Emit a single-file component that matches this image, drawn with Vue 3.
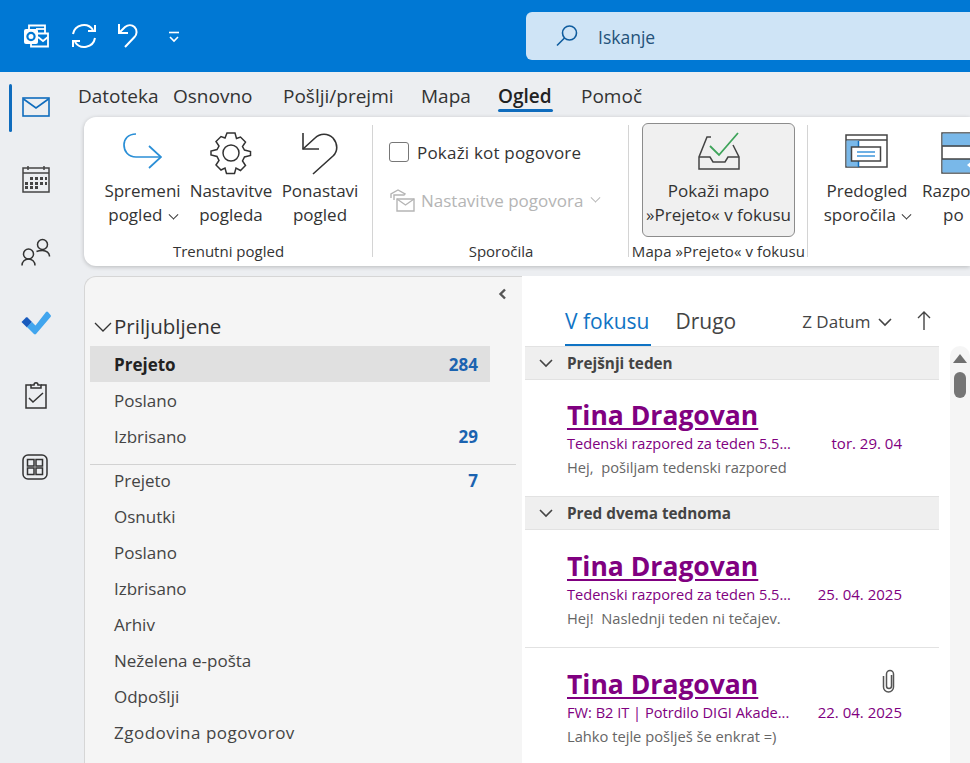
<template>
  <div class="app">
    <header class="titlebar">
      <div class="quick">
        <svg class="q-icon logo" width="25" height="24" viewBox="0 0 25 24" fill="none" stroke="#fff" stroke-width="1.800">
          <path d="M5 5V1.500h16V10" />
          <path d="M12 5h9" />
          <rect x="0" y="5" width="14" height="15" rx="2" fill="#fff" stroke="none" />
          <circle cx="7" cy="12.500" r="3.600" fill="none" stroke="#0078d4" stroke-width="2.200" />
          <path d="M14 9.500h10v13H7V20" />
          <path d="M14 13l5 4 5-4" />
        </svg>
        <svg class="q-icon" width="26" height="26" viewBox="0 0 26 26" fill="none" stroke="#fff" stroke-width="2">
          <path d="M2 11A11 11 0 0 1 22 7" />
          <path d="M24 2v6h-7" />
          <path d="M24 15A11 11 0 0 1 4 19" />
          <path d="M2 24v-6h7" />
        </svg>
        <svg class="q-icon" width="24" height="26" viewBox="0 0 24 26" fill="none" stroke="#fff" stroke-width="2">
          <path d="M2 1v9h9" />
          <path d="M2 10l6-6c3-2.500 7-2.500 9.500 0 3 3 2.500 7.500 0 10L8 24" />
        </svg>
        <svg class="q-small" width="12" height="12" viewBox="0 0 12 12" fill="none" stroke="#fff" stroke-width="1.600">
          <path d="M1 1.500h10" />
          <path d="M2 6l4 4 4-4" />
        </svg>
      </div>
      <div class="search">
        <svg width="24" height="24" viewBox="0 0 24 24" fill="none" stroke="#0f5c9e" stroke-width="1.600">
          <circle cx="14.500" cy="9" r="7" />
          <path d="M9.500 14L2 21.500" />
        </svg>
        <span>Iskanje</span>
      </div>
    </header>

    <div class="body">
      <nav class="rail">
        <div class="rail-item active">
          <svg width="28" height="20" viewBox="0 0 28 20" fill="none" stroke="#0f6cbd" stroke-width="1.600">
            <rect x="1" y="1" width="26" height="18" />
            <path d="M1.500 2L14 11 26.500 2" />
          </svg>
        </div>
        <div class="rail-item">
          <svg width="28" height="28" viewBox="0 0 28 28" fill="none" stroke="#444" stroke-width="1.500">
            <rect x="1" y="3" width="26" height="24" />
            <path d="M1 8h26M6 1v4M22 1v4" />
            <path d="M8 12h3v3H8zM13 12h3v3h-3zM18 12h3v3h-3zM23 12h2v3h-2zM3 17h3v3H3zM8 17h3v3H8zM13 17h3v3h-3zM18 17h3v3h-3zM23 17h2v3h-2zM3 21h3v3H3zM8 21h3v3H8zM13 21h3v3h-3z" fill="#444" stroke="none" />
          </svg>
        </div>
        <div class="rail-item">
          <svg class="nudge" width="30" height="30" viewBox="0 0 30 30" fill="none" stroke="#333" stroke-width="1.500">
            <circle cx="7.500" cy="18" r="5" />
            <path d="M1 29.500c0-4 3-6.500 6.500-6.500s6.500 2.500 6.500 6.500" />
            <circle cx="21.500" cy="8.500" r="5" />
            <path d="M15.500 15.500c1.800-.8 4-1 6-1 4 0 7 2.500 7 6" />
          </svg>
        </div>
        <div class="rail-item">
          <svg class="nudge" width="30" height="24" viewBox="0 0 30 24" fill="none">
            <path d="M.5 11L5 6.500c.5-.5 1-.5 1.500 0L11 11l-5 5.500z" fill="#185abd" />
            <path d="M6 16l5-5 3.500 3.500L25 1a1.500 1.500 0 0 1 2 0l2.500 3a1.500 1.500 0 0 1 0 2L15 23a1.500 1.500 0 0 1-2 0z" fill="#41a5ee" />
          </svg>
        </div>
        <div class="rail-item">
          <svg class="tasks" width="24" height="28" viewBox="0 0 24 28" fill="none" stroke="#333" stroke-width="1.500">
            <path d="M7 4H2v23h20V4h-5" />
            <path d="M7 7V4h3c0-3 4-3 4 0h3v3z" />
            <path d="M5 17l4 4 10-9" />
          </svg>
        </div>
        <div class="rail-item">
          <svg width="26" height="26" viewBox="0 0 26 26" fill="none" stroke="#333" stroke-width="1.500">
            <rect x="1" y="1" width="24" height="24" rx="5" />
            <rect x="5.500" y="5.500" width="6.500" height="6.500" />
            <rect x="14" y="5.500" width="6.500" height="6.500" />
            <rect x="5.500" y="14" width="6.500" height="6.500" />
            <rect x="14" y="14" width="6.500" height="6.500" />
          </svg>
        </div>
      </nav>

      <div class="content">
        <div class="tabs">
          <span v-for="t in tabs" :key="t.name" class="tab" :class="{ on: t.on }" :style="{ width: t.w + 'px' }">{{ t.name }}</span>
        </div>

        <section class="ribbon">
          <div class="group g1">
            <div class="group-body">
              <div class="big w1">
                <svg width="44" height="44" viewBox="0 0 44 44" fill="none" stroke="#2b8fd6" stroke-width="1.700">
                  <path d="M15 3C7 3 3 8 3 14s4 12 12 12h24" />
                  <path d="M28 15l12 11-12 11" />
                </svg>
                <span>Spremeni<br />pogled <i class="chev"></i></span>
              </div>
              <div class="big w2">
                <svg width="44" height="44" viewBox="0 0 44 44" fill="none" stroke="#333" stroke-width="1.500">
                  <path d="M18 2h8l1.500 5.500 4-1.500 5 5-3 4.500 2 3.500 6 1.500v4l-6 1.500-2 4 3 4.500-5 5-4.500-2.500-1.500 5.500h-8l-1.500-5.500-4 2-5-5 3-4.500-2-4-6-1.500v-4l6-1.500 2-3.500-3-4.500 5-5 4 1.500z" />
                  <circle cx="22" cy="22" r="8" />
                </svg>
                <span>Nastavitve<br />pogleda</span>
              </div>
              <div class="big w3">
                <svg width="40" height="44" viewBox="0 0 40 44" fill="none" stroke="#333" stroke-width="1.600">
                  <path d="M3 2v16h16" />
                  <path d="M3 18L15 7c5-5 13-5 18 0 5 6 5 13 0 18L13 43" />
                </svg>
                <span>Ponastavi<br />pogled</span>
              </div>
            </div>
            <div class="group-label">Trenutni pogled</div>
          </div>

          <div class="group g2">
            <div class="group-body col">
              <label class="check"><i class="box"></i>Pokaži kot pogovore</label>
              <div class="disabled">
                <svg width="26" height="24" viewBox="0 0 26 24" fill="none" stroke="#b5b5b5" stroke-width="1.400">
                  <path d="M2 10V6l7-4 7 4-1 1H5v5" />
                  <path d="M8 11h17v12H8z" />
                  <path d="M8 11l8.500 6L25 11" />
                </svg>
                <span>Nastavitve pogovora</span>
                <i class="chev grey"></i>
              </div>
            </div>
            <div class="group-label">Sporočila</div>
          </div>

          <div class="group g3">
            <div class="group-body">
              <div class="big pressed">
                <svg width="44" height="40" viewBox="0 0 44 40" fill="none" stroke="#444" stroke-width="1.500">
                  <path d="M14 5H10L2 25v12h40V25l-6-12" />
                  <path d="M2 25h11l3 5h12l3-5h11" />
                  <path d="M13 14l9 9L41 1" stroke="#3fa45b" stroke-width="1.800" />
                </svg>
                <span>Pokaži mapo<br />»Prejeto« v fokusu</span>
              </div>
            </div>
            <div class="group-label">Mapa »Prejeto« v fokusu</div>
          </div>

          <div class="group g4">
            <div class="group-body">
              <div class="big w4">
                <svg width="44" height="38" viewBox="0 0 44 38" fill="none" stroke="#444" stroke-width="1.500">
                  <rect x="1" y="1" width="41" height="32" fill="#fff" />
                  <path d="M1 6h41" />
                  <rect x="1.500" y="6.500" width="12" height="26" fill="#79b8e9" stroke="none" />
                  <path d="M13.500 7v26" stroke="#0f6cbd" />
                  <rect x="6.500" y="13" width="29" height="14" fill="#fff" />
                  <path d="M12 18h18M12 22h18" stroke="#3f97dc" />
                </svg>
                <span>Predogled<br />sporočila <i class="chev"></i></span>
              </div>
              <div class="big w5">
                <svg width="44" height="42" viewBox="0 0 44 42" fill="none" stroke="#444" stroke-width="1.500">
                  <rect x="1" y="1" width="42" height="40" fill="#fff" />
                  <rect x="1.500" y="1.500" width="41" height="13" fill="#79b8e9" stroke="none" />
                  <rect x="1.500" y="27" width="41" height="13.500" fill="#79b8e9" stroke="none" />
                  <path d="M1 14h42M1 27h42" />
                  <path d="M26 33l3-2.500 3 2.500-3 2.500z" fill="#fff" stroke="none" />
                </svg>
                <span>Razporeditev<br /><em>po</em></span>
              </div>
            </div>
            <div class="group-label">&nbsp;</div>
          </div>
        </section>

        <section class="main">
          <aside class="folders">
            <div class="collapse">
              <svg width="10" height="12" viewBox="0 0 10 12" fill="none" stroke="#555" stroke-width="2.400"><path d="M8 1.500L3.500 6 8 10.500" /></svg>
            </div>
            <div class="fav-head">
              <svg width="18" height="10" viewBox="0 0 18 10" fill="none" stroke="#333" stroke-width="1.300"><path d="M1 1l8 8 8-8" /></svg>
              <span>Priljubljene</span>
            </div>
            <div v-for="f in favorites" :key="f.name" class="folder" :class="{ sel: f.sel }">
              <span>{{ f.name }}</span><b v-if="f.count">{{ f.count }}</b>
            </div>
            <div class="rule"></div>
            <div v-for="f in folders" :key="f.name" class="folder" :class="{ wide: f.wide }">
              <span>{{ f.name }}</span><b v-if="f.count">{{ f.count }}</b>
            </div>
          </aside>

          <div class="list">
            <div class="list-head">
              <span class="ltab on">V fokusu</span>
              <span class="ltab">Drugo</span>
              <span class="sort">Z Datum
                <svg width="14" height="9" viewBox="0 0 14 9" fill="none" stroke="#444" stroke-width="1.600"><path d="M1 1l6 6 6-6" /></svg>
              </span>
              <svg class="up" width="14" height="20" viewBox="0 0 14 20" fill="none" stroke="#444" stroke-width="1.400"><path d="M7 19V1M1 7l6-6 6 6" /></svg>
            </div>
            <div class="list-wrap">
              <div class="messages">
                <template v-for="g in groups" :key="g.title">
                  <div class="group-head">
                    <svg width="14" height="9" viewBox="0 0 14 9" fill="none" stroke="#444" stroke-width="1.600"><path d="M1 1l6 6 6-6" /></svg>
                    <span>{{ g.title }}</span>
                  </div>
                  <article v-for="m in g.items" :key="m.date" class="msg" :class="{ tall: m.tall, divided: m.divided }">
                    <div class="sender">
                      <span>Tina Dragovan</span>
                      <svg v-if="m.clip" class="clip" width="14" height="24" viewBox="0 0 14 24" fill="none" stroke="#555" stroke-width="1.500">
                        <path d="M9.500 6v11a2.500 2.500 0 0 1-5 0V5a3.500 3.500 0 0 1 7 0v13a5 5 0 0 1-10 0V7" />
                      </svg>
                    </div>
                    <div class="subject"><span class="subj">{{ m.subject }}</span><span class="date">{{ m.date }}</span></div>
                    <div class="preview">{{ m.preview }}</div>
                  </article>
                </template>
              </div>
              <div class="scrollbar">
                <i class="arrow"></i>
                <i class="thumb"></i>
              </div>
            </div>
          </div>
        </section>
      </div>
    </div>
  </div>
</template>

<script setup>
const tabs = [
  { name: 'Datoteka', w: 95 },
  { name: 'Osnovno', w: 110 },
  { name: 'Pošlji/prejmi', w: 138 },
  { name: 'Mapa', w: 77 },
  { name: 'Ogled', w: 83, on: true },
  { name: 'Pomoč', w: 70 }
]

const favorites = [
  { name: 'Prejeto', count: 284, sel: true },
  { name: 'Poslano' },
  { name: 'Izbrisano', count: 29 }
]

const folders = [
  { name: 'Prejeto', count: 7 },
  { name: 'Osnutki' },
  { name: 'Poslano' },
  { name: 'Izbrisano' },
  { name: 'Arhiv' },
  { name: 'Neželena e-pošta' },
  { name: 'Odpošlji' },
  { name: 'Zgodovina pogovorov', wide: true }
]

const groups = [
  {
    title: 'Prejšnji teden',
    items: [
      { subject: 'Tedenski razpored za teden 5.5...', date: 'tor. 29. 04', preview: 'Hej,  pošiljam tedenski razpored' }
    ]
  },
  {
    title: 'Pred dvema tednoma',
    items: [
      { subject: 'Tedenski razpored za teden 5.5...', date: '25. 04. 2025', preview: 'Hej!  Naslednji teden ni tečajev.', tall: true },
      { subject: 'FW: B2 IT | Potrdilo DIGI Akade...', date: '22. 04. 2025', preview: 'Lahko tejle pošlješ še enkrat =)', clip: true, divided: true }
    ]
  }
]
</script>

<style>
html, body {
  margin: 0;
  height: 100%;
  overflow: hidden;
}
</style>

<style scoped>
.app {
  width: 970px;
  height: 763px;
  overflow: hidden;
  display: flex;
  flex-direction: column;
  background: #eceef1;
  color: #333;
  font-family: "Open Sans", "Liberation Sans", sans-serif;
}
.titlebar {
  flex: 0 0 72px;
  display: flex;
  align-items: center;
  background: #0078d4;
}
.quick {
  display: flex;
  align-items: center;
  width: 526px;
  padding-left: 24px;
  box-sizing: border-box;
}
.q-icon {
  margin-right: 20px;
}
.logo {
  margin-right: 22px;
}
.q-small {
  margin-left: 7px;
  margin-top: 2px;
}
.search {
  flex: 1;
  height: 48px;
  display: flex;
  align-items: center;
  gap: 19px;
  padding-left: 29px;
  background: #cfe4f6;
  border-radius: 6px 0 0 6px;
  color: #24527a;
  font-size: 17.500px;
}
.search span {
  margin-top: 2px;
}
.body {
  flex: 1;
  display: flex;
  min-height: 0;
}
.rail {
  flex: 0 0 84px;
  display: flex;
  flex-direction: column;
  margin-top: -1px;
}
.rail-item {
  position: relative;
  flex: 0 0 72px;
  display: flex;
  align-items: center;
  padding-left: 22px;
}
.rail-item.active::before {
  content: "";
  position: absolute;
  left: 9px;
  top: 13px;
  bottom: 11px;
  width: 3px;
  border-radius: 2px;
  background: #0f6cbd;
}
.tasks {
  margin-left: 2px;
}
.nudge {
  margin-left: -1px;
}
.content {
  flex: 1;
  min-width: 0;
  display: flex;
  flex-direction: column;
}
.tabs {
  flex: 0 0 45px;
  display: flex;
  align-items: flex-start;
  margin-left: -6px;
  padding-top: 9px;
  box-sizing: border-box;
  font-size: 19px;
  white-space: nowrap;
}
.tab {
  position: relative;
  height: 30px;
  line-height: 30px;
}
.tab.on {
  font-weight: 600;
  color: #222;
}
.tab.on::after {
  content: "";
  position: absolute;
  left: 0;
  width: 55px;
  bottom: -1px;
  height: 3px;
  background: #0f6cbd;
  border-radius: 2px;
}
.ribbon {
  flex: 0 0 149px;
  display: flex;
  background: #fff;
  border-radius: 12px 0 0 12px;
  box-shadow: 0 1px 4px rgba(0, 0, 0, .22);
  font-size: 17px;
  overflow: hidden;
}
.group {
  display: flex;
  flex-direction: column;
  position: relative;
  padding-top: 6px;
}
.group::after {
  content: "";
  position: absolute;
  right: 0;
  top: 8px;
  bottom: 9px;
  width: 1px;
  background: #d4d4d4;
}
.g1 { width: 289px; flex: none; }
.g2 { width: 256px; flex: none; }
.g3 { width: 179px; flex: none; }
.g4 { flex: 1; min-width: 0; }
.g4::after { display: none; }
.group-body {
  flex: 1;
  display: flex;
  padding-left: 20px;
  white-space: nowrap;
}
.g2 .group-body { padding-left: 16px; }
.g3 .group-body { padding-left: 13px; }
.g4 .group-body { padding-left: 14px; }
.group-body.col {
  flex-direction: column;
}
.group-label {
  height: 26px;
  line-height: 22px;
  text-align: center;
  font-size: 15px;
  white-space: nowrap;
}
.g3 .group-label {
  letter-spacing: .1px;
}
.big {
  display: flex;
  flex-direction: column;
  align-items: center;
  text-align: center;
  line-height: 24px;
  height: 116px;
}
.big svg {
  height: 50px;
  margin-top: 5px;
  margin-bottom: 1px;
  flex: none;
}
.w1 { width: 77px; flex: none; }
.w2 { width: 100px; flex: none; }
.w3 { width: 78px; flex: none; }
.w4 { width: 90px; flex: none; }
.w5 {
  flex: none;
  width: 120px;
  padding-left: 10px;
  align-items: flex-start;
  text-align: left;
}
.w5 svg {
  margin-left: 19px;
}
.w5 em {
  font-style: normal;
  padding-left: 21px;
}
.pressed {
  flex: none;
  width: 153px;
  height: 114px;
  box-sizing: border-box;
  background: #f0f0f0;
  border: 1px solid #8c8c8c;
  border-radius: 6px;
}
.pressed svg {
  margin-top: 3px;
  margin-bottom: 2px;
}
.chev {
  display: inline-block;
  width: 6px;
  height: 6px;
  border-right: 1.600px solid #333;
  border-bottom: 1.600px solid #333;
  transform: rotate(45deg) translate(-2px, -2px);
  margin-left: 3px;
}
.chev.grey {
  border-color: #b5b5b5;
}
.check {
  display: flex;
  align-items: center;
  gap: 8px;
  margin-top: 14px;
  height: 30px;
  letter-spacing: .2px;
}
.box {
  width: 18px;
  height: 18px;
  border: 1.500px solid #777;
  border-radius: 3px;
}
.disabled {
  display: flex;
  align-items: center;
  gap: 6px;
  margin-top: 21px;
  color: #b5b5b5;
}
.main {
  flex: 1;
  display: flex;
  margin-top: 10px;
  min-height: 0;
}
.folders {
  flex: 0 0 438px;
  box-sizing: border-box;
  background: #f5f5f5;
  border-top: 1px solid #d6d6d6;
  border-left: 1px solid #d6d6d6;
  border-radius: 12px 0 0 0;
  padding: 0 6px 0 5px;
  font-size: 17px;
}
.collapse {
  height: 17px;
  display: flex;
  justify-content: flex-end;
  padding: 11px 9px 0 0;
}
.fav-head {
  display: flex;
  align-items: center;
  gap: 2px;
  height: 41px;
  margin-left: 4px;
  font-size: 20.500px;
}
.fav-head svg {
  margin-top: 2px;
}
.folder {
  height: 36px;
  display: flex;
  align-items: center;
  justify-content: space-between;
  width: 400px;
  box-sizing: border-box;
  padding: 0 12px 0 24px;
  color: #444;
}
.folder.wide span {
  letter-spacing: .5px;
}
.folder b {
  color: #1b63b0;
  font-weight: 700;
}
.folder.sel {
  background: #e0e0e0;
  color: #222;
  font-weight: 700;
}
.rule {
  height: 1px;
  margin: 10px 0 -3px;
  background: #d2d2d2;
}
.list {
  flex: 1;
  min-width: 0;
  background: #fff;
  display: flex;
  flex-direction: column;
}
.list-head {
  flex: 0 0 70px;
  box-sizing: border-box;
  display: flex;
  align-items: center;
  padding: 20px 0 0 43px;
}
.ltab {
  font-size: 21px;
  color: #444;
  margin-right: 26px;
  line-height: 50px;
  position: relative;
}
.ltab.on {
  color: #0f73c4;
}
.ltab.on::after {
  content: "";
  position: absolute;
  left: 0;
  right: -2px;
  bottom: 0;
  height: 2px;
  background: #0f73c4;
}
.sort {
  margin-left: 40px;
  font-size: 17px;
  color: #444;
  display: flex;
  align-items: center;
  gap: 8px;
}
.sort svg {
  margin-top: 3px;
}
.up {
  margin-left: 25px;
}
.list-wrap {
  flex: 1;
  display: flex;
  min-height: 0;
}
.messages {
  width: 414px;
  margin-left: 3px;
  flex: none;
}
.group-head {
  height: 34px;
  box-sizing: border-box;
  display: flex;
  align-items: center;
  gap: 14px;
  padding-left: 14px;
  background: #efefef;
  border-top: 1px solid #e2e2e2;
  border-bottom: 1px solid #e2e2e2;
  font-size: 15.300px;
  font-weight: 700;
  color: #444;
}
.msg {
  height: 116px;
  box-sizing: border-box;
  padding: 16px 37px 0 42px;
}
.msg.tall {
  height: 117px;
  padding-top: 17px;
}
.msg.divided {
  border-top: 1px solid #e2e2e2;
  height: 116px;
  padding-top: 17px;
}
.sender {
  display: flex;
  justify-content: space-between;
  align-items: flex-start;
  height: 36px;
  line-height: 38px;
  font-size: 26.500px;
  font-weight: 700;
  color: #800080;
  text-decoration: underline;
  text-decoration-thickness: 2px;
  text-underline-offset: 3px;
}
.clip {
  margin: 4px 6px 0 0;
}
.subject {
  display: flex;
  justify-content: space-between;
  height: 23px;
  line-height: 23px;
  font-size: 14.600px;
  color: #800080;
}
.date {
  font-size: 15px;
}
.preview {
  height: 26px;
  line-height: 24px;
  font-size: 14.700px;
  color: #666;
  white-space: pre;
}
.scrollbar {
  margin-left: 11px;
  width: 21px;
  height: 100%;
  background: #f5f5f5;
  border-radius: 10px 10px 0 0;
  display: flex;
  flex-direction: column;
  align-items: center;
  padding-top: 8px;
  box-sizing: border-box;
}
.arrow {
  width: 0;
  height: 0;
  border-left: 7px solid transparent;
  border-right: 7px solid transparent;
  border-bottom: 9px solid #707070;
}
.thumb {
  width: 12px;
  height: 26px;
  margin-top: 9px;
  background: #757575;
  border-radius: 6px;
}
</style>
